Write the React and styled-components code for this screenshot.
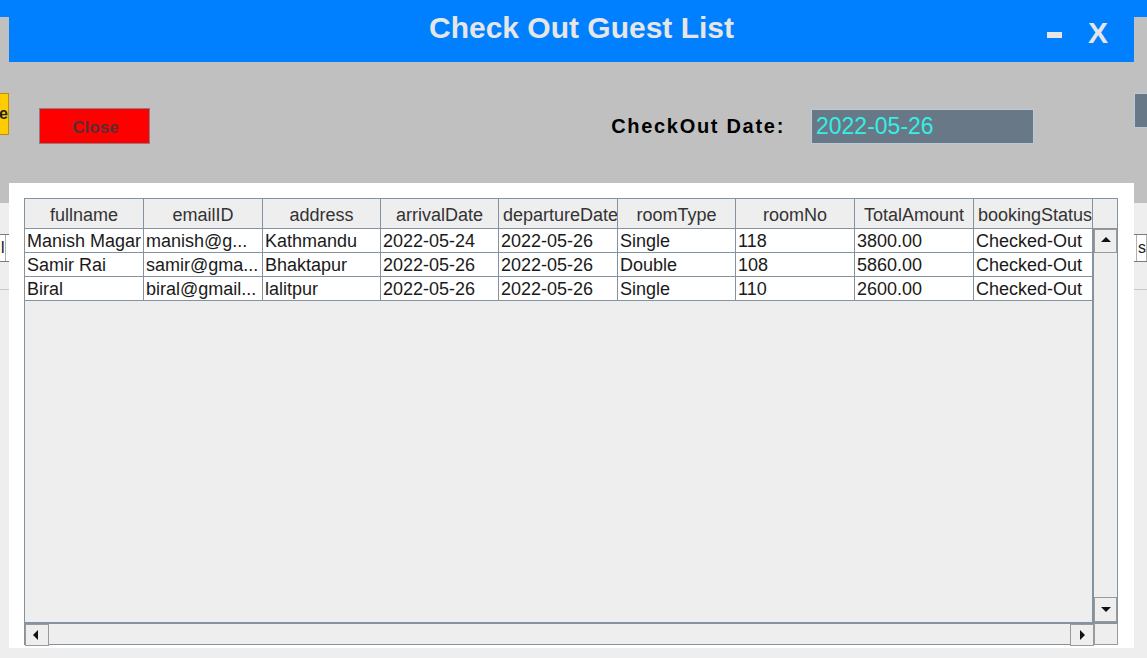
import React from "react";
import styled, { createGlobalStyle } from "styled-components";

const GlobalStyle = createGlobalStyle`
  html, body { margin: 0; padding: 0; }
  body {
    font-family: "Liberation Sans", Arial, sans-serif;
    background: #eeeeee;
  }
  * { box-sizing: border-box; }
`;

const FONT = `"Liberation Sans", Arial, sans-serif`;
const GRID = "#8592a0";

/* ---------- background window (partly hidden) ---------- */
const Desktop = styled.div`
  position: relative;
  width: 1147px;
  height: 658px;
  overflow: hidden;
  background: #eeeeee;
`;

const BackApp = styled.div`
  display: flex;
  flex-direction: column;
  height: 100%;
`;

const BackHeader = styled.div`
  height: 17px;
  background: #0080ff;
`;

const BackToolbar = styled.div`
  height: 186px;
  background: #c0c0c0;
  display: flex;
  justify-content: space-between;
  align-items: flex-start;
  padding-top: 76px;
`;

const BackButton = styled.div`
  width: 9px;
  height: 42px;
  background: #ffcc00;
  border: 1px solid #c09000;
  border-left: none;
  font: bold 16px ${FONT};
  color: #222;
  display: flex;
  align-items: center;
  justify-content: flex-end;
  overflow: hidden;
  white-space: nowrap;
`;

const BackField = styled.div`
  width: 13px;
  height: 35px;
  background: #687886;
  border: 1px solid #b9c9d8;
  border-right: none;
`;

const BackContent = styled.div`
  flex: 1;
  padding-top: 31px;
  background: #eeeeee;
`;

const BackTableHead = styled.div`
  display: flex;
  height: 28px;
  border-top: 1px solid #7a7a7a;
  border-bottom: 1px solid #7a7a7a;
  background: #ffffff;
`;

const BackHeadCell = styled.div`
  width: ${(p) => p.$w}px;
  flex: ${(p) => (p.$grow ? 1 : "none")};
  border-right: 1px solid #b0b0b0;
  font: 16px ${FONT};
  color: #222;
  display: flex;
  align-items: center;
  justify-content: flex-end;
  overflow: hidden;
  white-space: nowrap;
`;

const BackRow = styled.div`
  display: flex;
  height: 28px;
  border-bottom: 1px solid #c8c8c8;
`;

/* ---------- dialog ---------- */
const Dialog = styled.div`
  position: absolute;
  left: 9px;
  top: 0;
  width: 1125px;
  height: 648px;
  display: flex;
  flex-direction: column;
  background: #ffffff;
`;

const TitleBar = styled.div`
  height: 62px;
  background: #0080ff;
  display: flex;
  align-items: center;
  color: #e6e6e6;
  font-family: ${FONT};
`;

const Title = styled.h1`
  flex: 1;
  margin: 0;
  padding-left: 132px;
  text-align: center;
  font-size: 30px;
  font-weight: bold;
  color: #e6e6e6;
  transform: translateY(-3px);
`;

const WindowControls = styled.div`
  display: flex;
  align-items: center;
  gap: 26px;
  padding-right: 26px;
  width: 112px;
  justify-content: flex-end;
`;

const MinimizeBar = styled.span`
  display: block;
  width: 15px;
  height: 6px;
  background: #e6e6e6;
  margin-top: 8px;
`;

const CloseX = styled.span`
  font: bold 30px ${FONT};
  color: #e6e6e6;
  line-height: 1;
  margin-top: 4px;
`;

const Toolbar = styled.div`
  height: 121px;
  background: #c0c0c0;
  display: flex;
  align-items: flex-start;
  padding: 46px 100px 0 30px;
`;

const RedButton = styled.button`
  width: 111px;
  height: 36px;
  background: #ff0000;
  border: 1px solid #8b7e86;
  font: bold 17px ${FONT};
  color: #5a2d33;
  padding: 3px 0 0 2px;
  cursor: pointer;
`;

const FieldGroup = styled.div`
  margin-left: auto;
  display: flex;
  align-items: center;
  height: 36px;
  gap: 26px;
`;

const FieldLabel = styled.label`
  font: bold 20px ${FONT};
  letter-spacing: 1.7px;
  color: #000;
`;

const DateField = styled.div`
  width: 223px;
  height: 35px;
  background: #687886;
  border: 1px solid #b9c9d8;
  color: #33efe6;
  font: 23px ${FONT};
  display: flex;
  align-items: center;
  padding-left: 4px;
  padding-top: 1px;
`;

const TablePanel = styled.div`
  flex: 1;
  background: #ffffff;
  padding: 15px 17px 3px 15px;
`;

const ScrollPane = styled.div`
  height: 100%;
  display: grid;
  grid-template-columns: 1069px 24px;
  grid-template-rows: 31px 393px 23px;
  border-left: 1px solid ${GRID};
`;

const HeaderRow = styled.div`
  display: grid;
  grid-template-columns: 119px 119px 118px 118px 119px 118px 119px 119px 119px;
  border-top: 1px solid ${GRID};
  border-bottom: 1px solid ${GRID};
  background: #eeeeee;
`;

const HeaderCell = styled.div`
  border-right: 1px solid ${GRID};
  font: 18px ${FONT};
  color: #333;
  display: flex;
  align-items: center;
  justify-content: ${(p) => (p.$left ? "flex-start" : "center")};
  padding-left: ${(p) => (p.$left ? "4px" : "0")};
  padding-top: 4px;
  overflow: hidden;
  white-space: nowrap;
`;

const HeaderCorner = styled.div`
  border-top: 1px solid ${GRID};
  border-bottom: 1px solid ${GRID};
  border-right: 1px solid ${GRID};
  background: #eeeeee;
`;

const Viewport = styled.div`
  background: #eeeeee;
  border-right: 2px solid ${GRID};
  overflow: hidden;
`;

const Row = styled.div`
  display: grid;
  grid-template-columns: 119px 119px 118px 118px 119px 118px 119px 119px 119px;
  height: 24px;
  background: #ffffff;
  border-bottom: 1px solid ${GRID};
`;

const Cell = styled.div`
  border-right: 1px solid ${GRID};
  font: 18px ${FONT};
  color: #1a1a1a;
  padding-left: 2px;
  padding-top: 2px;
  display: flex;
  align-items: center;
  white-space: nowrap;
  overflow: hidden;
`;

const VScroll = styled.div`
  display: flex;
  flex-direction: column;
  justify-content: space-between;
  background: #eeeeee;
  border-right: 1px solid ${GRID};
`;

const HScroll = styled.div`
  display: flex;
  justify-content: space-between;
  background: #eeeeee;
  border-top: 2px solid ${GRID};
  border-bottom: 1px solid ${GRID};
`;

const ArrowButton = styled.div`
  width: ${(p) => p.$w || 24}px;
  height: ${(p) => p.$h || 24}px;
  background: #eeeeee;
  border: 1px solid #8a8a8a;
  border-top-color: #ffffff;
  border-left-color: #ffffff;
  display: flex;
  align-items: center;
  justify-content: center;
  outline: 1px solid #9a9a9a;
  outline-offset: -1px;
`;

const Corner = styled.div`
  background: #eeeeee;
  border: 1px solid #9a9a9a;
  border-top: 2px solid ${GRID};
`;

const Arrow = ({ dir }) => {
  const pts = {
    up: "1,7 6,2 11,7",
    down: "1,3 6,8 11,3",
    left: "7,1 2,6 7,11",
    right: "4,1 9,6 4,11",
  }[dir];
  return (
    <svg width="12" height="12" viewBox="0 0 12 12">
      <polygon points={pts} fill="#111" />
    </svg>
  );
};

const columns = [
  { name: "fullname" },
  { name: "emailID" },
  { name: "address" },
  { name: "arrivalDate" },
  { name: "departureDate", left: true },
  { name: "roomType" },
  { name: "roomNo" },
  { name: "TotalAmount" },
  { name: "bookingStatus", left: true },
];

const rows = [
  ["Manish Magar", "manish@g...", "Kathmandu", "2022-05-24", "2022-05-26", "Single", "118", "3800.00", "Checked-Out"],
  ["Samir Rai", "samir@gma...", "Bhaktapur", "2022-05-26", "2022-05-26", "Double", "108", "5860.00", "Checked-Out"],
  ["Biral", "biral@gmail...", "lalitpur", "2022-05-26", "2022-05-26", "Single", "110", "2600.00", "Checked-Out"],
];

export default function App() {
  return (
    <>
      <GlobalStyle />
      <Desktop>
        <BackApp>
          <BackHeader />
          <BackToolbar>
            <BackButton>Home</BackButton>
            <BackField />
          </BackToolbar>
          <BackContent>
            <BackTableHead>
              <BackHeadCell $w={6}>I</BackHeadCell>
              <BackHeadCell $grow />
              <BackHeadCell $w={10}>s</BackHeadCell>
            </BackTableHead>
            <BackRow />
          </BackContent>
        </BackApp>

        <Dialog>
          <TitleBar>
            <Title>Check Out Guest List</Title>
            <WindowControls>
              <MinimizeBar />
              <CloseX>X</CloseX>
            </WindowControls>
          </TitleBar>

          <Toolbar>
            <RedButton>Close</RedButton>
            <FieldGroup>
              <FieldLabel>CheckOut Date:</FieldLabel>
              <DateField>2022-05-26</DateField>
            </FieldGroup>
          </Toolbar>

          <TablePanel>
            <ScrollPane>
              <HeaderRow>
                {columns.map((c) => (
                  <HeaderCell key={c.name} $left={c.left}>
                    {c.name}
                  </HeaderCell>
                ))}
              </HeaderRow>
              <HeaderCorner />
              <Viewport>
                {rows.map((r, i) => (
                  <Row key={i}>
                    {r.map((v, j) => (
                      <Cell key={j}>{v}</Cell>
                    ))}
                  </Row>
                ))}
              </Viewport>
              <VScroll>
                <ArrowButton $w={23} $h={24}>
                  <Arrow dir="up" />
                </ArrowButton>
                <ArrowButton $w={23} $h={25}>
                  <Arrow dir="down" />
                </ArrowButton>
              </VScroll>
              <HScroll>
                <ArrowButton $w={24} $h={22}>
                  <Arrow dir="left" />
                </ArrowButton>
                <ArrowButton $w={24} $h={22}>
                  <Arrow dir="right" />
                </ArrowButton>
              </HScroll>
              <Corner />
            </ScrollPane>
          </TablePanel>
        </Dialog>
      </Desktop>
    </>
  );
}
